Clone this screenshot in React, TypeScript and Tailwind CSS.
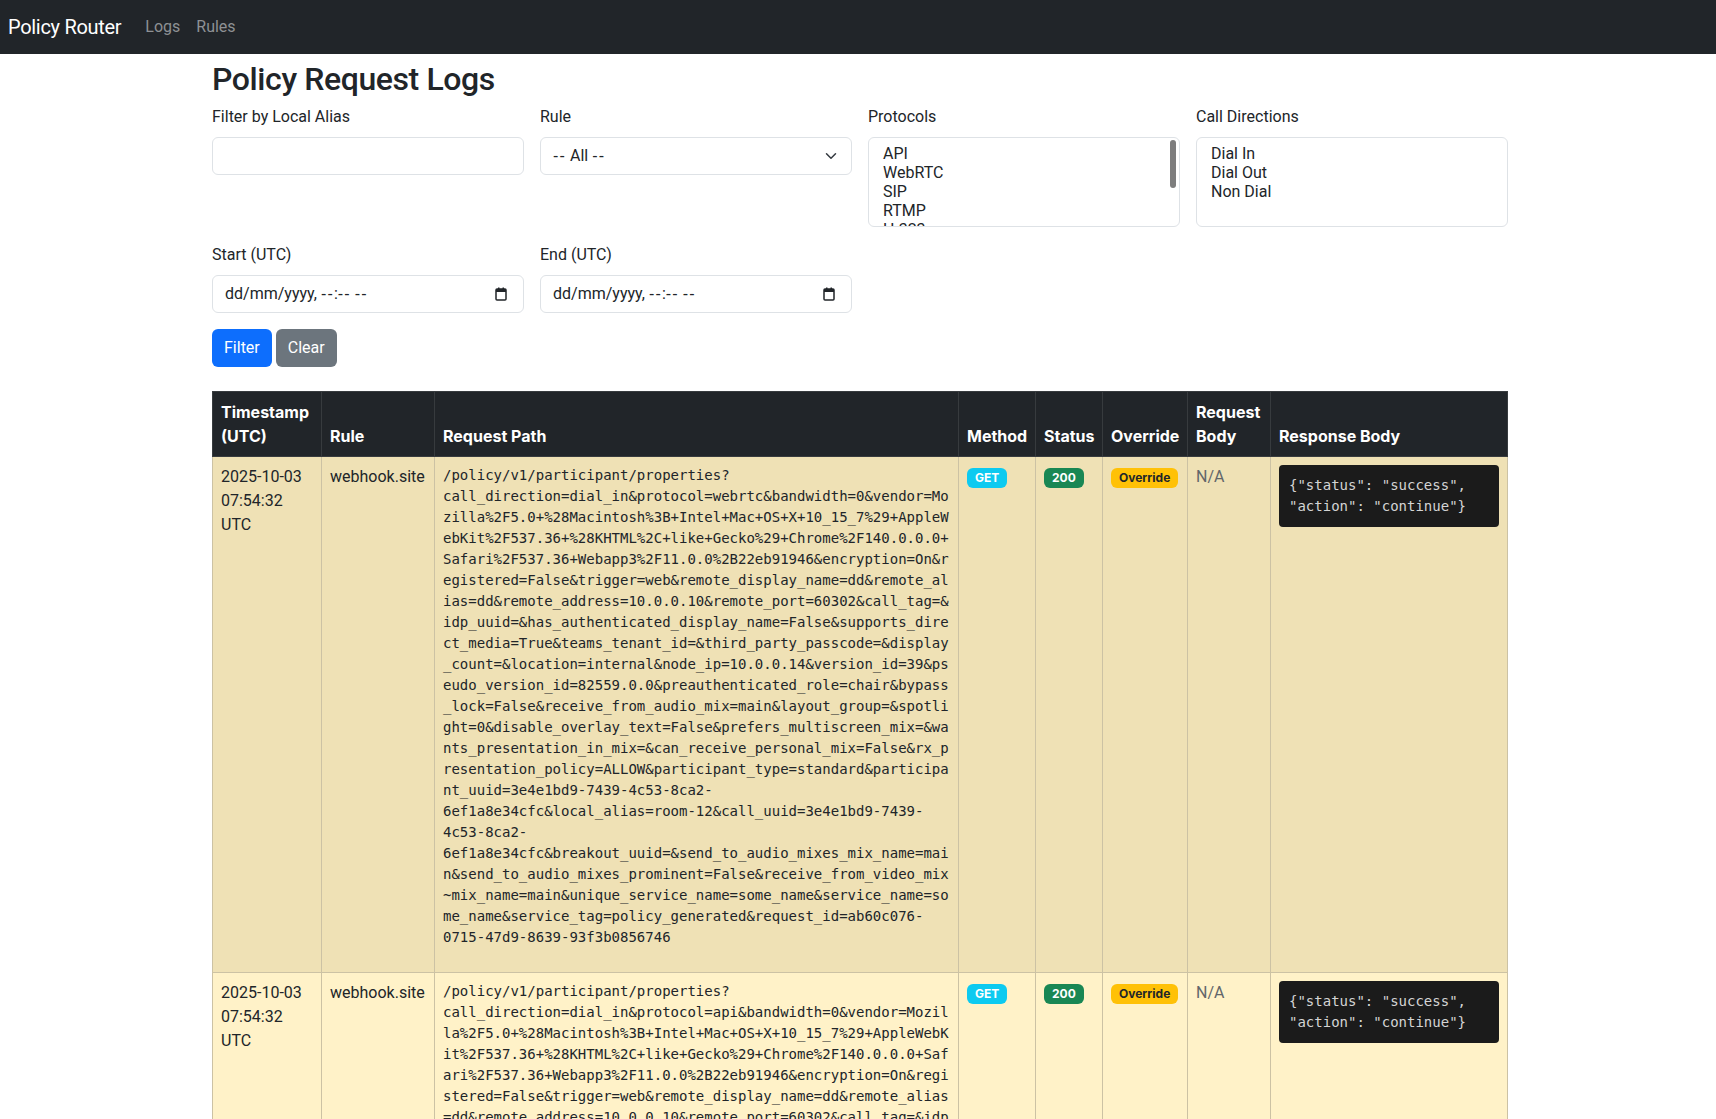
import React from "react";

const tail =
  "&bandwidth=0&vendor=Mozilla%2F5.0+%28Macintosh%3B+Intel+Mac+OS+X+10_15_7%29+AppleWebKit%2F537.36+%28KHTML%2C+like+Gecko%29+Chrome%2F140.0.0.0+Safari%2F537.36+Webapp3%2F11.0.0%2B22eb91946&encryption=On&registered=False&trigger=web&remote_display_name=dd&remote_alias=dd&remote_address=10.0.0.10&remote_port=60302&call_tag=&idp_uuid=&has_authenticated_display_name=False&supports_direct_media=True&teams_tenant_id=&third_party_passcode=&display_count=&location=internal&node_ip=10.0.0.14&version_id=39&pseudo_version_id=82559.0.0&preauthenticated_role=chair&bypass_lock=False&receive_from_audio_mix=main&layout_group=&spotlight=0&disable_overlay_text=False&prefers_multiscreen_mix=&wants_presentation_in_mix=&can_receive_personal_mix=False&rx_presentation_policy=ALLOW&participant_type=standard&participant_uuid=3e4e1bd9-7439-4c53-8ca2-6ef1a8e34cfc&local_alias=room-12&call_uuid=3e4e1bd9-7439-4c53-8ca2-6ef1a8e34cfc&breakout_uuid=&send_to_audio_mixes_mix_name=main&send_to_audio_mixes_prominent=False&receive_from_video_mix~mix_name=main&unique_service_name=some_name&service_name=some_name&service_tag=policy_generated&request_id=ab60c076-0715-47d9-8639-93f3b0856746";

const logs = [
  {
    ts: "2025-10-03 07:54:32 UTC",
    rule: "webhook.site",
    path: "/policy/v1/participant/properties?call_direction=dial_in&protocol=webrtc" + tail,
    method: "GET",
    status: 200,
    bg: "bg-[#efe1b5]",
  },
  {
    ts: "2025-10-03 07:54:32 UTC",
    rule: "webhook.site",
    path: "/policy/v1/participant/properties?call_direction=dial_in&protocol=api" + tail,
    method: "GET",
    status: 200,
    bg: "bg-[#fff2c8]",
  },
];

const mono = "font-['DejaVu_Sans_Mono',monospace]";

// roboto hyphens are tiny and run together, use a wider dash glyph
function Dashed({ text }: { text: string }) {
  return (
    <>
      {text.split(/(-+)/).map((part, i) =>
        part.startsWith("-") ? (
          <span key={i} className="font-['Liberation_Sans',sans-serif] tracking-[1.2px]">
            {part}
          </span>
        ) : (
          <React.Fragment key={i}>{part}</React.Fragment>
        )
      )}
    </>
  );
}

function Chevron() {
  return (
    <svg width="12" height="12" viewBox="0 0 16 16">
      <path d="m2 5 6 6 6-6" fill="none" stroke="#343a40" strokeWidth="2" strokeLinecap="round" strokeLinejoin="round" />
    </svg>
  );
}

function CalendarIcon() {
  return (
    <svg width="12" height="14" viewBox="0 0 12 14">
      <rect x="1" y="2" width="10" height="11" rx="1" fill="none" stroke="#212529" strokeWidth="1.5" />
      <rect x="1" y="2" width="10" height="3" fill="#212529" />
      <rect x="3" y="0.5" width="1.5" height="2.5" fill="#212529" />
      <rect x="7.5" y="0.5" width="1.5" height="2.5" fill="#212529" />
    </svg>
  );
}

function Field({ label, children }: { label: string; children: React.ReactNode }) {
  return (
    <div>
      <div className="mb-2 leading-6">{label}</div>
      {children}
    </div>
  );
}

function DateInput() {
  return (
    <div className="h-[38px] flex items-center justify-between rounded-[6px] border border-[#dee2e6] pl-3 pr-[16px]">
      <span>
        <Dashed text="dd/mm/yyyy, --:-- --" />
      </span>
      <CalendarIcon />
    </div>
  );
}

function MultiSelect({ options, scroll }: { options: string[]; scroll?: boolean }) {
  return (
    <div className="relative h-[90px] overflow-hidden rounded-[6px] border border-[#dee2e6] pl-[14px] py-[6px]">
      {options.map((o) => (
        <div key={o} className="leading-[19px]">
          {o}
        </div>
      ))}
      {scroll && <div className="absolute right-[3px] top-[2px] h-[48px] w-[6px] rounded-full bg-[#7d7d7d]" />}
    </div>
  );
}

function Badge({ className, children }: { className: string; children: React.ReactNode }) {
  return (
    <span
      className={
        "inline-block rounded-[6px] px-[8px] py-[4px] font-['Inter',sans-serif] text-[12px] font-bold leading-none " +
        className
      }
    >
      {children}
    </span>
  );
}

export default function App() {
  return (
    <div className="min-h-screen bg-white text-[#212529] font-['Roboto',sans-serif] text-base">
      <nav className="h-[54px] bg-[#212529] flex items-center px-2">
        <span className="text-white text-[20px] tracking-[-0.3px] mr-4">Policy Router</span>
        <a className="px-2 text-[#8e9194]">Logs</a>
        <a className="px-2 text-[#8e9194]">Rules</a>
      </nav>

      <div className="w-[1296px] ml-[212px] pt-[6px]">
        <h2 className="text-[32px] font-medium leading-[1.2] tracking-[-0.4px] mb-[7px]">Policy Request Logs</h2>

        <div className="grid grid-cols-4 gap-4">
          <Field label="Filter by Local Alias">
            <div className="h-[38px] rounded-[6px] border border-[#dee2e6]" />
          </Field>
          <Field label="Rule">
            <div className="h-[38px] flex items-center justify-between rounded-[6px] border border-[#dee2e6] pl-3 pr-[14px]">
              <span>
                <Dashed text="-- All --" />
              </span>
              <Chevron />
            </div>
          </Field>
          <Field label="Protocols">
            <MultiSelect options={["API", "WebRTC", "SIP", "RTMP", "H.323"]} scroll />
          </Field>
          <Field label="Call Directions">
            <MultiSelect options={["Dial In", "Dial Out", "Non Dial"]} />
          </Field>
          <Field label="Start (UTC)">
            <DateInput />
          </Field>
          <Field label="End (UTC)">
            <DateInput />
          </Field>
          <div className="col-span-4 flex gap-1">
            <button className="h-[38px] px-3 rounded-[6px] bg-[#0d6efd] text-white">Filter</button>
            <button className="h-[38px] px-3 rounded-[6px] bg-[#6c757d] text-white">Clear</button>
          </div>
        </div>

        <table className="mt-6 w-full table-fixed border-collapse text-left leading-6">
          <colgroup>
            <col className="w-[109px]" />
            <col className="w-[113px]" />
            <col className="w-[524px]" />
            <col className="w-[77px]" />
            <col className="w-[67px]" />
            <col className="w-[85px]" />
            <col className="w-[83px]" />
            <col />
          </colgroup>
          <thead>
            <tr className="bg-[#212529] text-white">
              {["Timestamp (UTC)", "Rule", "Request Path", "Method", "Status", "Override", "Request Body", "Response Body"].map(
                (h) => (
                  <th key={h} className="border border-[#373b3e] p-2 align-bottom font-['Inter',sans-serif] font-bold">
                    {h}
                  </th>
                )
              )}
            </tr>
          </thead>
          <tbody>
            {logs.map((log, i) => (
              <tr key={i} className={log.bg}>
                <td className="border border-[#ccc2a4] p-2 align-top">{log.ts}</td>
                <td className="border border-[#ccc2a4] p-2 align-top">{log.rule}</td>
                <td className="border border-[#ccc2a4] p-2 align-top">
                  <pre className={"mb-4 whitespace-pre-wrap break-words text-[14px] leading-[21px] " + mono}>{log.path}</pre>
                </td>
                <td className="border border-[#ccc2a4] p-2 align-top">
                  <Badge className="bg-[#0dcaf0] text-white">{log.method}</Badge>
                </td>
                <td className="border border-[#ccc2a4] p-2 align-top">
                  <Badge className="bg-[#198754] text-white">{log.status}</Badge>
                </td>
                <td className="border border-[#ccc2a4] p-2 align-top">
                  <Badge className="bg-[#ffc107] text-[#212529]">Override</Badge>
                </td>
                <td className="border border-[#ccc2a4] p-2 align-top text-[#62666a]">N/A</td>
                <td className="border border-[#ccc2a4] p-2 align-top">
                  <pre
                    className={
                      "rounded-[4px] bg-[#1b1b1b] px-[10px] py-[10px] whitespace-pre-wrap text-[14px] leading-[21px] text-[#d4d4d4] " +
                      mono
                    }
                  >
                    {'{"status": "success", "action": "continue"}'}
                  </pre>
                </td>
              </tr>
            ))}
          </tbody>
        </table>
      </div>
    </div>
  );
}
